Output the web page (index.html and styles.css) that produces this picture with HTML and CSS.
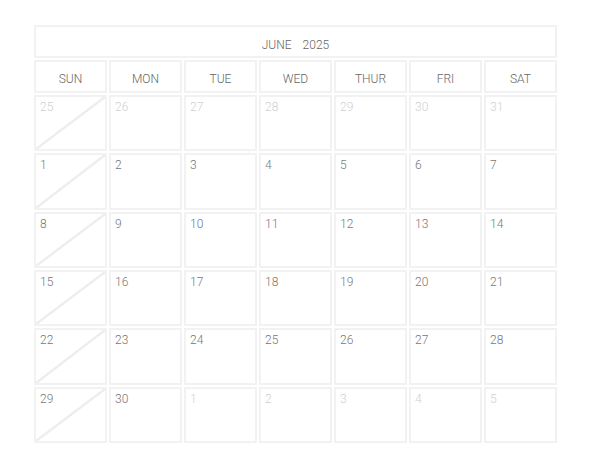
FILE: index.html
```html
<!DOCTYPE html>
<html>
<head>
<meta charset="utf-8">
<link rel="stylesheet" href="styles.css">
</head>
<body>
<div class="calendar">
  <div class="title"><span>JUNE</span><span>2025</span></div>
  <div class="dow">SUN</div>
  <div class="dow">MON</div>
  <div class="dow">TUE</div>
  <div class="dow">WED</div>
  <div class="dow">THUR</div>
  <div class="dow">FRI</div>
  <div class="dow">SAT</div>

  <div class="day other sun">25</div>
  <div class="day other">26</div>
  <div class="day other">27</div>
  <div class="day other">28</div>
  <div class="day other">29</div>
  <div class="day other">30</div>
  <div class="day other">31</div>

  <div class="day sun">1</div>
  <div class="day">2</div>
  <div class="day">3</div>
  <div class="day">4</div>
  <div class="day">5</div>
  <div class="day">6</div>
  <div class="day">7</div>

  <div class="day sun">8</div>
  <div class="day">9</div>
  <div class="day">10</div>
  <div class="day">11</div>
  <div class="day">12</div>
  <div class="day">13</div>
  <div class="day">14</div>

  <div class="day sun">15</div>
  <div class="day">16</div>
  <div class="day">17</div>
  <div class="day">18</div>
  <div class="day">19</div>
  <div class="day">20</div>
  <div class="day">21</div>

  <div class="day sun">22</div>
  <div class="day">23</div>
  <div class="day">24</div>
  <div class="day">25</div>
  <div class="day">26</div>
  <div class="day">27</div>
  <div class="day">28</div>

  <div class="day sun">29</div>
  <div class="day">30</div>
  <div class="day other">1</div>
  <div class="day other">2</div>
  <div class="day other">3</div>
  <div class="day other">4</div>
  <div class="day other">5</div>
</div>
</body>
</html>
```
FILE: styles.css
```css
html, body {
  margin: 0;
  padding: 0;
  background: #ffffff;
}
body {
  font-family: Roboto, "Liberation Sans", sans-serif;
  font-weight: 300;
  color: #777;
  padding: 25px 0 0 34px;
}
.calendar {
  width: 523px;
  display: grid;
  grid-template-columns: repeat(7, 1fr);
  grid-template-rows: 33px 33px repeat(6, 56.33px);
  gap: 2px;
}
.calendar > div {
  box-sizing: border-box;
  border: 2px solid #f2f2f2;
}
.title {
  grid-column: 1 / span 7;
  display: flex;
  justify-content: center;
  align-items: center;
  gap: 11px;
  font-size: 12px;
  color: #666;
  padding-top: 6px;
}
.dow {
  display: flex;
  justify-content: center;
  align-items: center;
  font-size: 12px;
  color: #666;
  padding-top: 5px;
}
.day {
  font-size: 12px;
  padding: 3px 0 0 4px;
  line-height: 14px;
  color: #777;
}
.day.other {
  color: #d0d0d0;
}
.day.sun {
  background: linear-gradient(to bottom right, transparent calc(50% - 1.5px), #eeeeee calc(50% - 1px), #eeeeee calc(50% + 1px), transparent calc(50% + 1.5px));
}
```
